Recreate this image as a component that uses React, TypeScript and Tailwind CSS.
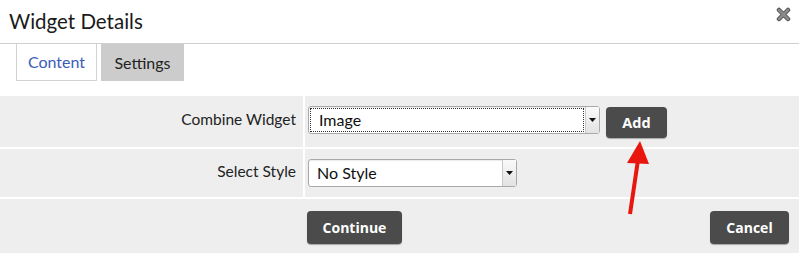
import React from 'react';

const SelectBox: React.FC<{ value: string; width: string; focused?: boolean }> = ({ value, width, focused }) => (
  <div className={`flex h-[28px] ${width} rounded-[3px] border border-[#a9a9a9] bg-white shadow-[inset_0_1px_1px_rgba(0,0,0,0.08)]`}>
    <div className={`flex flex-1 items-center pl-[8px] text-[16px] text-[#111] ${focused ? 'm-[1px] border border-dotted border-[#333]' : ''}`}>
      {value}
    </div>
    <div className="flex w-[14px] items-center justify-center border-l border-[#c8c8c8] bg-[linear-gradient(#fafafa,#e2e2e2)]">
      <svg width="7" height="4" viewBox="0 0 7 4">
        <path d="M0 0h7L3.5 4z" fill="#111" />
      </svg>
    </div>
  </div>
);

export default function App() {
  return (
    <div className="relative h-[253px] w-[799px] overflow-hidden bg-white font-['Lato',sans-serif]">
      <div className="flex h-[44px] items-center justify-between border-b border-[#cfcfcf] pl-[9px] pr-[8px]">
        <h2 className="text-[20.5px] text-[#1a1a1a]">Widget Details</h2>
        <svg width="15" height="15" viewBox="0 0 15 15" className="-mt-[14px]">
          <path d="M3 3l9 9M12 3l-9 9" stroke="#555" strokeWidth="4.5" strokeLinecap="round" />
          <path d="M3 3l9 9M12 3l-9 9" stroke="#8a8a8a" strokeWidth="2.5" strokeLinecap="round" />
        </svg>
      </div>

      <div className="flex h-[37px] gap-[4px] pl-[16px]">
        <div className="flex w-[81px] items-center justify-center border-x border-b border-[#d2d2d2] text-[16px] text-[#3b5bb8]">
          Content
        </div>
        <div className="flex w-[83px] items-center justify-center bg-[#cccccc] text-[16px] text-[#222]">
          Settings
        </div>
      </div>

      <div className="mt-[15px] bg-[#eeeeee]">
        <div className="flex h-[53px] border-b-2 border-white">
          <div className="flex w-[305px] justify-end border-r-2 border-white pr-[7px] pt-[12px] text-[15.5px] text-[#222]">
            Combine Widget
          </div>
          <div className="flex gap-[6px] pl-[3px] pt-[10px]">
            <SelectBox value="Image" width="w-[292px]" focused />
            <button className="mt-[1px] h-[31px] w-[61px] rounded-[4px] bg-[#4b4b4b] font-['Open_Sans',sans-serif] text-[14.5px] font-bold text-white shadow-[0_1px_1px_rgba(0,0,0,0.3)]">
              Add
            </button>
          </div>
        </div>
        <div className="flex h-[50px] border-b-2 border-white">
          <div className="flex w-[305px] justify-end border-r-2 border-white pr-[7px] pt-[11px] text-[15.5px] text-[#222]">
            Select Style
          </div>
          <div className="pl-[3px] pt-[10px]">
            <SelectBox value="No Style" width="w-[209px]" />
          </div>
        </div>
        <div className="flex h-[54px] justify-between pl-[307px] pr-[10px] pt-[12px]">
          <button className="h-[33px] w-[95px] rounded-[4px] bg-[#4b4b4b] font-['Open_Sans',sans-serif] text-[14px] font-bold text-white shadow-[0_1px_1px_rgba(0,0,0,0.3)]">
            Continue
          </button>
          <button className="h-[33px] w-[79px] rounded-[4px] bg-[#4b4b4b] font-['Open_Sans',sans-serif] text-[14px] font-bold text-white shadow-[0_1px_1px_rgba(0,0,0,0.3)]">
            Cancel
          </button>
        </div>
      </div>

      <svg className="absolute left-[618px] top-[140px]" width="34" height="76" viewBox="0 0 34 76">
        <path d="M12 74L20 20" stroke="#e8160f" strokeWidth="4" />
        <path d="M22 1L9 23L31 24z" fill="#e8160f" />
      </svg>
    </div>
  );
}
